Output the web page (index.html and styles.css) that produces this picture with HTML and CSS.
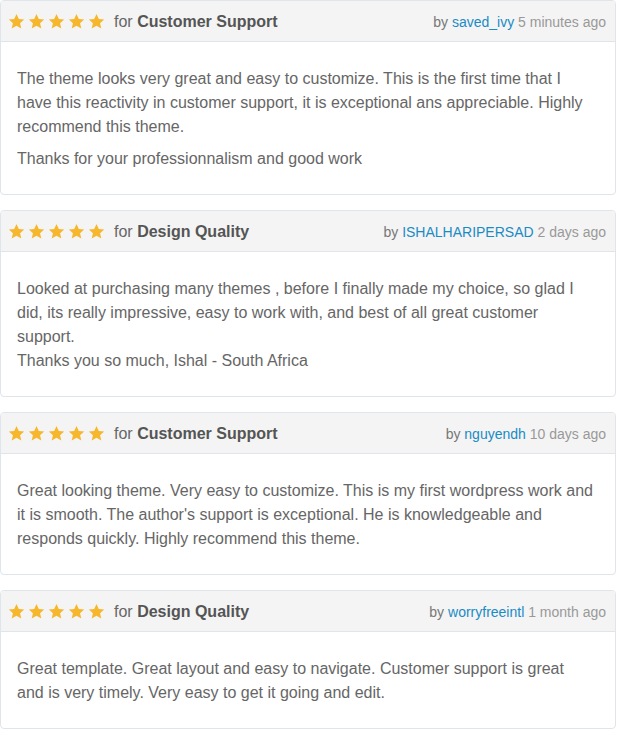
FILE: index.html
```html
<!DOCTYPE html>
<html>
<head>
<meta charset="utf-8">
<link rel="stylesheet" href="styles.css">
</head>
<body>
<svg width="0" height="0" class="defs">
  <defs>
    <symbol id="star" viewBox="0 0 24 24"><path d="M12 1.5l3.2 7.1 7.6.7-5.8 5.1 1.8 7.6L12 18l-6.8 4 1.8-7.6-5.8-5.1 7.6-.7z"/></symbol>
  </defs>
</svg>
<div class="list">
  <div class="review">
    <div class="head">
      <div class="left">
        <span class="stars"><svg><use href="#star"/></svg><svg><use href="#star"/></svg><svg><use href="#star"/></svg><svg><use href="#star"/></svg><svg><use href="#star"/></svg></span>
        <span class="for">for <b>Customer Support</b></span>
      </div>
      <div class="meta"><span class="by">by</span> <a>saved_ivy</a> 5 minutes ago</div>
    </div>
    <div class="body">
      <p>The theme looks very great and easy to customize. This is the first time that I have this reactivity in customer support, it is exceptional ans appreciable. Highly recommend this theme.</p>
      <p>Thanks for your professionnalism and good work</p>
    </div>
  </div>
  <div class="review">
    <div class="head">
      <div class="left">
        <span class="stars"><svg><use href="#star"/></svg><svg><use href="#star"/></svg><svg><use href="#star"/></svg><svg><use href="#star"/></svg><svg><use href="#star"/></svg></span>
        <span class="for">for <b>Design Quality</b></span>
      </div>
      <div class="meta"><span class="by">by</span> <a>ISHALHARIPERSAD</a> 2 days ago</div>
    </div>
    <div class="body">
      <p>Looked at purchasing many themes , before I finally made my choice, so glad I did, its really impressive, easy to work with, and best of all great customer support.<br>Thanks you so much, Ishal - South Africa</p>
    </div>
  </div>
  <div class="review">
    <div class="head">
      <div class="left">
        <span class="stars"><svg><use href="#star"/></svg><svg><use href="#star"/></svg><svg><use href="#star"/></svg><svg><use href="#star"/></svg><svg><use href="#star"/></svg></span>
        <span class="for">for <b>Customer Support</b></span>
      </div>
      <div class="meta"><span class="by">by</span> <a>nguyendh</a> 10 days ago</div>
    </div>
    <div class="body">
      <p>Great looking theme. Very easy to customize. This is my first wordpress work and it is smooth. The author's support is exceptional. He is knowledgeable and responds quickly. Highly recommend this theme.</p>
    </div>
  </div>
  <div class="review">
    <div class="head">
      <div class="left">
        <span class="stars"><svg><use href="#star"/></svg><svg><use href="#star"/></svg><svg><use href="#star"/></svg><svg><use href="#star"/></svg><svg><use href="#star"/></svg></span>
        <span class="for">for <b>Design Quality</b></span>
      </div>
      <div class="meta"><span class="by">by</span> <a>worryfreeintl</a> 1 month ago</div>
    </div>
    <div class="body">
      <p>Great template. Great layout and easy to navigate. Customer support is great<br>and is very timely. Very easy to get it going and edit.</p>
    </div>
  </div>
</div>
</body>
</html>
```
FILE: styles.css
```css
* { box-sizing: border-box; }
html, body { margin: 0; padding: 0; background: #fff; }
body { font-family: "Liberation Sans", Arial, sans-serif; color: #666; }
.defs { position: absolute; width: 0; height: 0; }
.list { display: flex; flex-direction: column; gap: 15px; width: 616px; }
.review { border: 1px solid #dfe5ea; border-radius: 4px; overflow: hidden; }
.head {
  height: 41px;
  background: #f4f4f4;
  border-bottom: 1px solid #dfe5ea;
  display: flex;
  align-items: center;
  justify-content: space-between;
  padding: 1px 9px 0 7px;
}
.left { display: flex; align-items: center; }
.stars { display: flex; gap: 3px; margin-right: 9px; margin-top: -1px; }
.stars svg { width: 17px; height: 17px; fill: #f6b72d; }
.for { font-size: 16px; color: #666; }
.for b { color: #555; }
.meta { font-size: 14px; color: #999; }
.meta .by { color: #777; }
.meta a { color: #1a8bc4; }
.body { padding: 25px 16px 15px; }
.body p { margin: 0 0 8px; font-size: 16px; line-height: 24px; }
```
